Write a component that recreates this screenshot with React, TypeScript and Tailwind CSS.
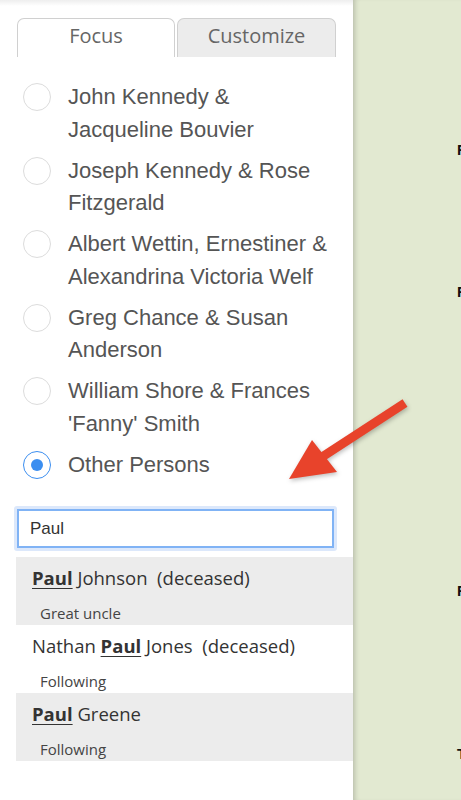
import React from "react";

const couples: string[][] = [
  ["John Kennedy &", "Jacqueline Bouvier"],
  ["Joseph Kennedy & Rose", "Fitzgerald"],
  ["Albert Wettin, Ernestiner &", "Alexandrina Victoria Welf"],
  ["Greg Chance & Susan", "Anderson"],
  ["William Shore & Frances", "'Fanny' Smith"],
];

type Result = { before?: string; after: string; note: string };

const results: Result[] = [
  { after: " Johnson\u00a0\u00a0(deceased)", note: "Great uncle" },
  { before: "Nathan ", after: " Jones\u00a0\u00a0(deceased)", note: "Following" },
  { after: " Greene", note: "Following" },
];

function Radio({ checked }: { checked?: boolean }) {
  return (
    <span
      className={`mt-[2px] flex h-[28px] w-[28px] shrink-0 items-center justify-center rounded-full border-[1.5px] bg-white ${
        checked ? "border-[#3b8ef0]" : "border-[#dcdcdc]"
      }`}
    >
      {checked && <span className="h-[12px] w-[12px] rounded-full bg-[#3b8ef0]" />}
    </span>
  );
}

export default function App() {
  return (
    <div className="relative flex h-[800px] w-[461px] overflow-hidden bg-white">
      {/* side panel */}
      <div className="flex w-[353px] shrink-0 flex-col bg-white">
        <div className="h-[6px] bg-gradient-to-b from-[#eeeeee] to-white" />

        {/* tabs */}
        <div className="ml-[17px] mt-[12px] flex gap-[2px] font-['Open_Sans',sans-serif] text-[20px] text-[#666]">
          <div className="flex h-[39px] w-[158px] items-center justify-center rounded-t-[7px] border border-b-0 border-[#d0d0d0] bg-white pb-[4px]">
            Focus
          </div>
          <div className="flex h-[39px] w-[159px] items-center justify-center rounded-t-[7px] border border-b-0 border-[#d0d0d0] bg-[#ececec] pb-[4px]">
            Customize
          </div>
        </div>

        {/* focus options */}
        <div className="mt-[24px] flex flex-col gap-[8.6px] pl-[23px] font-['Liberation_Sans',Arial,sans-serif] text-[22px] leading-[32.5px] text-[#555]">
          {couples.map((c) => (
            <div key={c[0]} className="flex gap-[17px]">
              <Radio />
              <div className="whitespace-nowrap">
                <div>{c[0]}</div>
                <div>{c[1]}</div>
              </div>
            </div>
          ))}
          <div className="flex gap-[17px]">
            <Radio checked />
            <div>Other Persons</div>
          </div>
        </div>

        {/* search */}
        <div className="ml-[14px] mt-[25px] w-[323px] rounded-[3px] bg-[#dce8fb] p-[3px]">
          <div className="flex h-[39px] items-center border-2 border-[#80b3f5] bg-white pl-[11px] font-['Liberation_Sans',Arial,sans-serif] text-[17px] text-[#333]">
            Paul
          </div>
        </div>

        {/* results */}
        <div className="ml-[16px] mt-[6px] flex flex-col font-['Open_Sans',sans-serif]">
          {results.map((r, i) => (
            <div
              key={i}
              className={`h-[68px] pl-[16px] pt-[8px] ${i % 2 === 0 ? "bg-[#ececec]" : "bg-white"}`}
            >
              <div className="whitespace-nowrap text-[18.5px] leading-[26px] text-[#333]">
                {r.before}
                <span className="font-bold underline underline-offset-[3px]">Paul</span>
                {r.after}
              </div>
              <div className="mt-[12px] pl-[8px] text-[15px] leading-[20px] text-[#444]">{r.note}</div>
            </div>
          ))}
        </div>
      </div>

      {/* tree canvas */}
      <div className="relative flex-1 bg-[#e2e9d1] shadow-[inset_5px_0_5px_-3px_rgba(0,0,0,0.18)]">
        <span className="absolute left-[104px] top-[139px] font-['Liberation_Sans',Arial,sans-serif] text-[15px] font-bold text-[#111]">
          Fr
        </span>
        <span className="absolute left-[104px] top-[281px] font-['Liberation_Sans',Arial,sans-serif] text-[15px] font-bold text-[#111]">
          Fr
        </span>
        <span className="absolute left-[104px] top-[580px] font-['Liberation_Sans',Arial,sans-serif] text-[15px] font-bold text-[#111]">
          Fr
        </span>
        <span className="absolute left-[104px] top-[743px] font-['Liberation_Sans',Arial,sans-serif] text-[15px] font-bold text-[#111]">
          Th
        </span>
      </div>

      {/* annotation arrow */}
      <svg className="pointer-events-none absolute left-0 top-0" width="461" height="800" viewBox="0 0 461 800">
        <g style={{ filter: "drop-shadow(1px 2px 2px rgba(0,0,0,0.25))" }}>
          <line x1="405" y1="403" x2="322" y2="457" stroke="#e8432b" strokeWidth="9" />
          <polygon points="289,479 312,440 337,472" fill="#e8432b" />
        </g>
      </svg>
    </div>
  );
}
